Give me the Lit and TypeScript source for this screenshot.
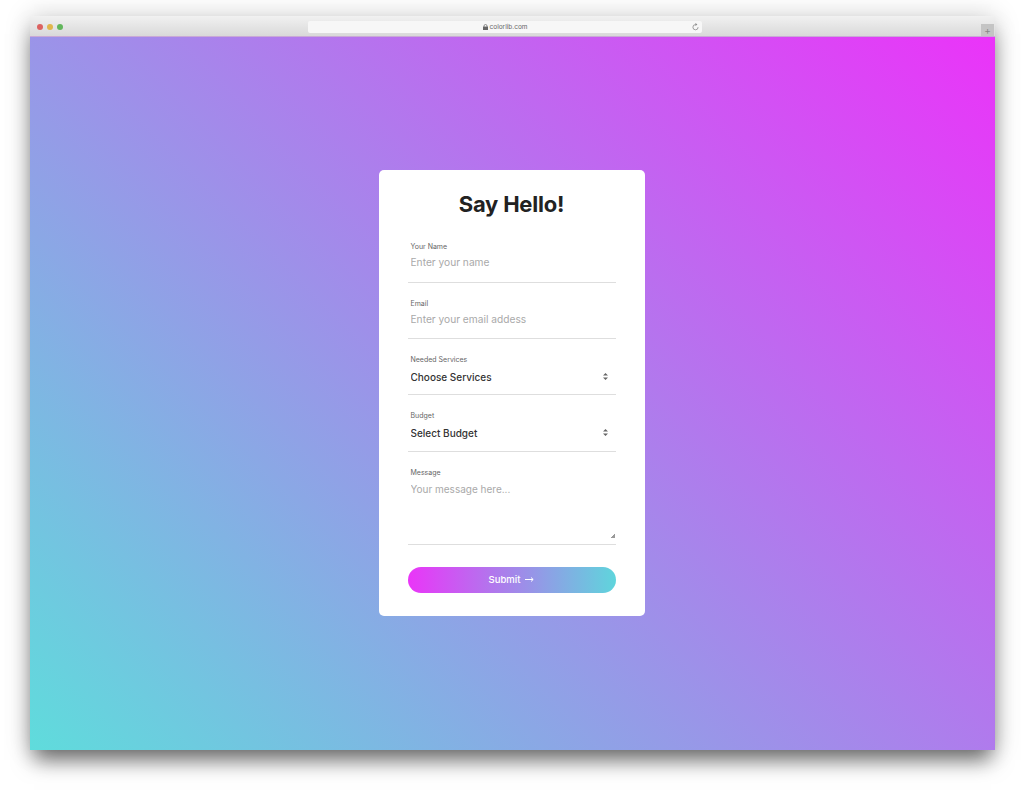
import { LitElement, html, css, svg } from "lit";
import { customElement } from "lit/decorators.js";

const updown = svg`<svg class="updown" width="5" height="7" viewBox="0 0 5 7"><path d="M2.5 0 5 2.6H0zM2.5 7 0 4.4h5z" fill="#666"/></svg>`;

@customElement("app-root")
export class AppRoot extends LitElement {
  static styles = css`
    :host { display: block; width: 1024px; height: 792px; background: #fff; overflow: hidden; font-family: Inter, "Liberation Sans", sans-serif; }
    .stage { height: 792px; box-sizing: border-box; padding: 16px 29px 0 30px; }
    .window { height: 734px; display: flex; flex-direction: column; box-shadow: 0 14px 20px -4px rgba(0,0,0,.55), 0 0 24px rgba(0,0,0,.18); }
    .bar { height: 21px; flex: none; display: flex; align-items: flex-start; background: linear-gradient(#f1f1f1, #d9d9d9); border-bottom: 1px solid #c9a9d6; box-sizing: border-box; }
    .dots { display: flex; gap: 4px; padding: 8px 0 0 7px; width: 278px; box-sizing: border-box; flex: none; }
    .dot { width: 6px; height: 6px; border-radius: 50%; }
    .url { margin-top: 5px; width: 394px; height: 12px; background: #f7f7f7; border-radius: 2px; display: flex; align-items: center; justify-content: center; gap: 2px; position: relative; font-size: 6.5px; color: #666; flex: none; }
    .reload { position: absolute; right: 3px; top: 2px; }
    .plus { margin: 8px 1px 0 auto; width: 13px; height: 12px; background: #c4c4c4; color: #888; font-size: 10px; line-height: 12px; text-align: center; }
    .page { flex: 1; display: flex; align-items: center; justify-content: center; padding: 0 2px 1px 0; background: linear-gradient(45deg, #5fdcdc, #eb33f9); }
    .card { width: 266px; box-sizing: border-box; background: #fff; border-radius: 5px; padding: 16px 29px 23.28px; }
    h1 { margin: 0 0 4.4px; font-size: 22px; line-height: 36px; font-weight: 700; color: #222; text-align: center; letter-spacing: -.2px; }
    .field { display: block; padding: 15px 3px 11.33px; border-bottom: 1px solid #dedede; }
    .field span { display: block; font-size: 7px; line-height: 11px; margin-bottom: 2px; color: #666; }
    input, textarea, select { display: block; width: 100%; box-sizing: border-box; border: 0; padding: 0; margin: 0; outline: 0; background: none; font: inherit; line-height: 16px; height: 16px; }
    input { font-size: 10.2px; }
    ::placeholder { color: #a9a9a9; opacity: 1; }
    .sel { display: flex; align-items: center; justify-content: space-between; padding-right: 5px; margin: 4px 0 -2px; }
    select { appearance: none; -webkit-appearance: none; color: #333; font-size: 10px; font-weight: 500; flex: 1; }
    .updown { flex: none; margin-bottom: 1px; }
    textarea { width: calc(100% + 2px); font-size: 10px; height: 59px; padding-top: 1px; resize: vertical; }
    textarea::-webkit-resizer { background: linear-gradient(135deg, transparent 50%, #999 50%) right 0 bottom 1px / 4px 4px no-repeat; }
    .field.msg { padding-bottom: 5px; }
    button { margin-top: 22px; width: 100%; height: 26px; border: 0; border-radius: 13px; display: flex; align-items: center; justify-content: center; gap: 5px; background: linear-gradient(90deg, #ea35f8, #5fd5dc); color: #fff; font: inherit; font-size: 9.5px; font-weight: 500; padding: 0; }
  `;

  render() {
    return html`<div class="stage"><div class="window">
      <div class="bar">
        <div class="dots">
          <div class="dot" style="background:#dc6260"></div>
          <div class="dot" style="background:#e0b64c"></div>
          <div class="dot" style="background:#62b65c"></div>
        </div>
        <div class="url">
          <svg width="5" height="6" viewBox="0 0 5 6"><path d="M1 3V2a1.5 1.5 0 0 1 3 0v1" fill="none" stroke="#666" stroke-width=".7"/><rect y="2.6" width="5" height="3.4" fill="#666"/></svg>
          <span>colorlib.com</span>
          <svg class="reload" width="7" height="8" viewBox="0 0 7 8"><path d="M3.5 1.6a2.6 2.6 0 1 0 2.6 2.6" fill="none" stroke="#888" stroke-width=".8"/><path d="M3.4 0 5.4 1.6 3.4 3z" fill="#888"/></svg>
        </div>
        <div class="plus">+</div>
      </div>
      <div class="page">
        <form class="card">
          <h1>Say Hello!</h1>
          <label class="field"><span>Your Name</span><input placeholder="Enter your name"></label>
          <label class="field"><span>Email</span><input placeholder="Enter your email addess"></label>
          <label class="field"><span>Needed Services</span><div class="sel"><select><option>Choose Services</option></select>${updown}</div></label>
          <label class="field"><span>Budget</span><div class="sel"><select><option>Select Budget</option></select>${updown}</div></label>
          <label class="field msg"><span>Message</span><textarea placeholder="Your message here..."></textarea></label>
          <button type="button">Submit
            <svg width="9" height="5" viewBox="0 0 9 5"><path d="M0 2.5h8M6 .5l2.2 2L6 4.5" fill="none" stroke="#fff" stroke-width="1"/></svg>
          </button>
        </form>
      </div>
    </div></div>`;
  }
}
